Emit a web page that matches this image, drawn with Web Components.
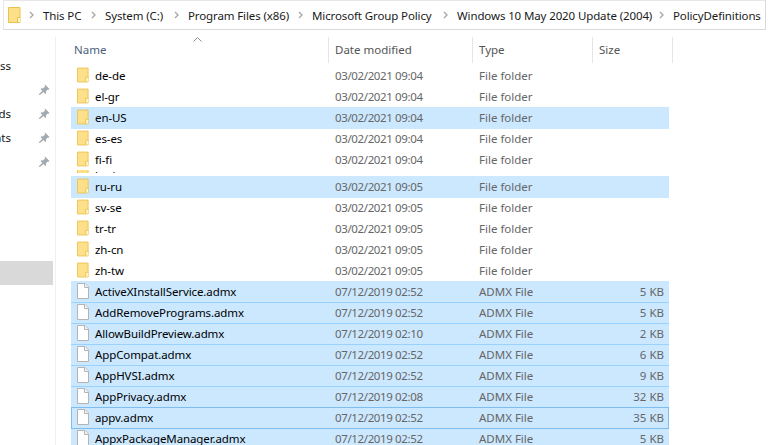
<!DOCTYPE html>
<html lang="en">
<head>
<meta charset="utf-8">
<title>PolicyDefinitions</title>
<style>
  html, body { margin: 0; height: 100%; background: #fff; overflow: hidden; }
  body { font: 11.5px "Noto Sans", "Open Sans", sans-serif; color: #000; display: flex; flex-direction: column; }
  .main { display: flex; flex: 1; min-height: 0; }
</style>
</head>
<body>
<fe-breadcrumb>
  <fe-crumb style="width:62px">This PC</fe-crumb>
  <fe-crumb style="width:83px">System (C:)</fe-crumb>
  <fe-crumb style="width:124px">Program Files (x86)</fe-crumb>
  <fe-crumb style="width:145px">Microsoft Group Policy</fe-crumb>
  <fe-crumb style="width:216px">Windows 10 May 2020 Update (2004)</fe-crumb>
  <fe-crumb style="width:105px">PolicyDefinitions</fe-crumb>
</fe-breadcrumb>
<div class="main">
  <fe-nav>
    <fe-nav-item label="Quick access"></fe-nav-item>
    <fe-nav-item pinned></fe-nav-item>
    <fe-nav-item label="Downloads" pinned></fe-nav-item>
    <fe-nav-item label="Documents" pinned></fe-nav-item>
    <fe-nav-item pinned></fe-nav-item>
    <fe-nav-item current></fe-nav-item>
  </fe-nav>
  <fe-list>
    <fe-row icon="folder" name="de-de" date="03/02/2021 09:04" type="File folder"></fe-row>
    <fe-row icon="folder" name="el-gr" date="03/02/2021 09:04" type="File folder"></fe-row>
    <fe-row icon="folder" name="en-US" date="03/02/2021 09:04" type="File folder" state="sel"></fe-row>
    <fe-row icon="folder" name="es-es" date="03/02/2021 09:04" type="File folder"></fe-row>
    <fe-row icon="folder" name="fi-fi" date="03/02/2021 09:04" type="File folder"></fe-row>
    <fe-row icon="folder" name="hu-hu" state="sliver"></fe-row>
    <fe-row icon="folder" name="ru-ru" date="03/02/2021 09:05" type="File folder" state="sel"></fe-row>
    <fe-row icon="folder" name="sv-se" date="03/02/2021 09:05" type="File folder"></fe-row>
    <fe-row icon="folder" name="tr-tr" date="03/02/2021 09:05" type="File folder"></fe-row>
    <fe-row icon="folder" name="zh-cn" date="03/02/2021 09:05" type="File folder"></fe-row>
    <fe-row icon="folder" name="zh-tw" date="03/02/2021 09:05" type="File folder"></fe-row>
    <fe-row icon="file" name="ActiveXInstallService.admx" date="07/12/2019 02:52" type="ADMX File" size="5 KB" state="sel"></fe-row>
    <fe-row icon="file" name="AddRemovePrograms.admx" date="07/12/2019 02:52" type="ADMX File" size="5 KB" state="run"></fe-row>
    <fe-row icon="file" name="AllowBuildPreview.admx" date="07/12/2019 02:10" type="ADMX File" size="2 KB" state="run"></fe-row>
    <fe-row icon="file" name="AppCompat.admx" date="07/12/2019 02:52" type="ADMX File" size="6 KB" state="run"></fe-row>
    <fe-row icon="file" name="AppHVSI.admx" date="07/12/2019 02:52" type="ADMX File" size="9 KB" state="run"></fe-row>
    <fe-row icon="file" name="AppPrivacy.admx" date="07/12/2019 02:08" type="ADMX File" size="32 KB" state="run"></fe-row>
    <fe-row icon="file" name="appv.admx" date="07/12/2019 02:52" type="ADMX File" size="35 KB" state="focus"></fe-row>
    <fe-row icon="file" name="AppxPackageManager.admx" date="07/12/2019 02:52" type="ADMX File" size="5 KB" state="sel"></fe-row>
  </fe-list>
</div>
<script>
const FOLDER_SVG = `<svg width="13" height="16" viewBox="0 0 13 16"><path d="M.5.5h11.500v15H.5z" fill="#ffe08a" stroke="#e9c350"/><path d="M12.500 10.500h-3v5" fill="none" stroke="#e9c350"/><path d="M10 11h2v4h-2z" fill="#fff3c9"/></svg>`;
const FILE_SVG = `<svg width="12" height="16" viewBox="0 0 12 16"><path d="M.5.500h7.500l3.500 3.500v11.500H.5z" fill="#fff" stroke="#b4b4b4"/><path d="M7.500.5v4h4" fill="#f2f2f2" stroke="#b4b4b4"/></svg>`;
const PIN_SVG = `<svg width="11" height="11" viewBox="0 0 12 12"><path d="M6.500.5l5 5-1 .8-1-.3-2 2.200.3 1.800-.9.800-2-2L1 12H0v-.8l3.600-3.800-2-2 .9-.9 1.800.3L6.600 2.700 6.200 1.500z" fill="#a2a9b0"/></svg>`;

class FeBreadcrumb extends HTMLElement {
  connectedCallback() {
    this.attachShadow({ mode: 'open' });
    this.shadowRoot.innerHTML = `
      <style>
        :host { display: flex; align-items: center; height: 28px; margin: 0 12px 0 3px; flex: none;
                border: 1px solid #d9d9d9; border-left-color: #e6e6e6; border-top-color: #e6e6e6; padding-left: 4px; }
        .home { display: flex; width: 15px; }
      </style>
      <span class="home">${FOLDER_SVG}</span>
      <slot></slot>
    `;
  }
}

class FeCrumb extends HTMLElement {
  connectedCallback() {
    this.attachShadow({ mode: 'open' });
    this.shadowRoot.innerHTML = `
      <style>
        :host { display: flex; align-items: center; white-space: nowrap; flex: none; color: #1a1a1a; letter-spacing: -.12px; }
        svg { flex: none; margin: 0 9px 0 6px; }
      </style>
      <svg width="5" height="8" viewBox="0 0 5 8"><path d="M1 1l3 3-3 3" fill="none" stroke="#a6a6a6" stroke-width="1.300"/></svg>
      <slot></slot>
    `;
  }
}

class FeNav extends HTMLElement {
  connectedCallback() {
    this.attachShadow({ mode: 'open' });
    this.shadowRoot.innerHTML = `
      <style>
        :host { display: block; flex: none; width: 55px; margin-top: 7px; padding-top: 16px;
                border-right: 1px solid #f0f0f0; }
        ::slotted(:last-child) { margin-top: 88px; }
      </style>
      <slot></slot>
    `;
  }
}

class FeNavItem extends HTMLElement {
  connectedCallback() {
    const label = this.getAttribute('label') || '';
    const pin = this.hasAttribute('pinned');
    this.attachShadow({ mode: 'open' });
    this.shadowRoot.innerHTML = `
      <style>
        :host { display: flex; align-items: center; height: 24px; width: 53px; overflow: hidden; }
        :host([current]) { background: #d9d9d9; }
        .label { flex: none; width: 80px; margin-left: -69px; text-align: right; white-space: nowrap; color: #111; }
        .pin { display: flex; margin-left: 28px; }
      </style>
      <span class="label">${label}</span>
      ${pin ? `<span class="pin">${PIN_SVG}</span>` : ''}
    `;
  }
}

class FeList extends HTMLElement {
  connectedCallback() {
    this.attachShadow({ mode: 'open' });
    this.shadowRoot.innerHTML = `
      <style>
        :host { display: block; flex: 1; min-width: 0; padding: 7px 0 0 15px; }
        .head { display: grid; grid-template-columns: 258px 144px 120px 80px; height: 25px; position: relative; }
        .head div { border-right: 1px solid #e5e5e5; padding-left: 6px; line-height: 26px; color: #555; }
        .head div:first-child { padding-left: 3px; color: #4c607a; }
        .caret { position: absolute; left: 122px; top: 0; }
        .rows { padding-top: 3px; }
      </style>
      <div class="head">
        <div>Name</div><div>Date modified</div><div>Type</div><div>Size</div>
        <svg class="caret" width="9" height="5" viewBox="0 0 9 5"><path d="M.5 4.500l4-4 4 4" fill="none" stroke="#909090"/></svg>
      </div>
      <div class="rows"><slot></slot></div>
    `;
  }
}

class FeRow extends HTMLElement {
  connectedCallback() {
    const a = n => this.getAttribute(n) || '';
    this.attachShadow({ mode: 'open' });
    this.shadowRoot.innerHTML = `
      <style>
        :host { display: block; height: 21px; width: 598px; position: relative; }
        :host([state="sliver"]) { height: 6px; }
        .row { display: grid; grid-template-columns: 257px 144px 120px 77px; height: 22px; box-sizing: border-box;
               padding-bottom: 2px; align-items: center; }
        :host([state="sliver"]) .clip { height: 3px; overflow: hidden; }
        :host([state="sliver"]) .row { margin-top: -5px; }
        :host([state="sel"]) .row { background: #cce8ff; }
        :host([state="run"]) .row { background: #cce8ff; box-shadow: inset 0 1px #99d1ff; }
        :host([state="focus"]) { z-index: 1; }
        :host([state="focus"]) .row { background: #cce8ff; box-shadow: inset 0 0 0 1px #7dbdf0; }
        .name { display: flex; align-items: center; gap: 6px; padding-left: 6px; white-space: nowrap; color: #000; letter-spacing: -.1px; }
        .icon { display: flex; width: 12px; }
        .cell { color: #666; padding-left: 7px; white-space: nowrap; }
        .date { letter-spacing: -.37px; }
        .size { text-align: right; padding-right: 5px; }
      </style>
      <div class="clip"><div class="row">
        <div class="name"><span class="icon">${a('icon') === 'file' ? FILE_SVG : FOLDER_SVG}</span><span>${a('name')}</span></div>
        <div class="cell date">${a('date')}</div>
        <div class="cell">${a('type')}</div>
        <div class="cell size">${a('size')}</div>
      </div></div>
    `;
  }
}

customElements.define('fe-breadcrumb', FeBreadcrumb);
customElements.define('fe-crumb', FeCrumb);
customElements.define('fe-nav', FeNav);
customElements.define('fe-nav-item', FeNavItem);
customElements.define('fe-list', FeList);
customElements.define('fe-row', FeRow);
</script>
</body>
</html>
